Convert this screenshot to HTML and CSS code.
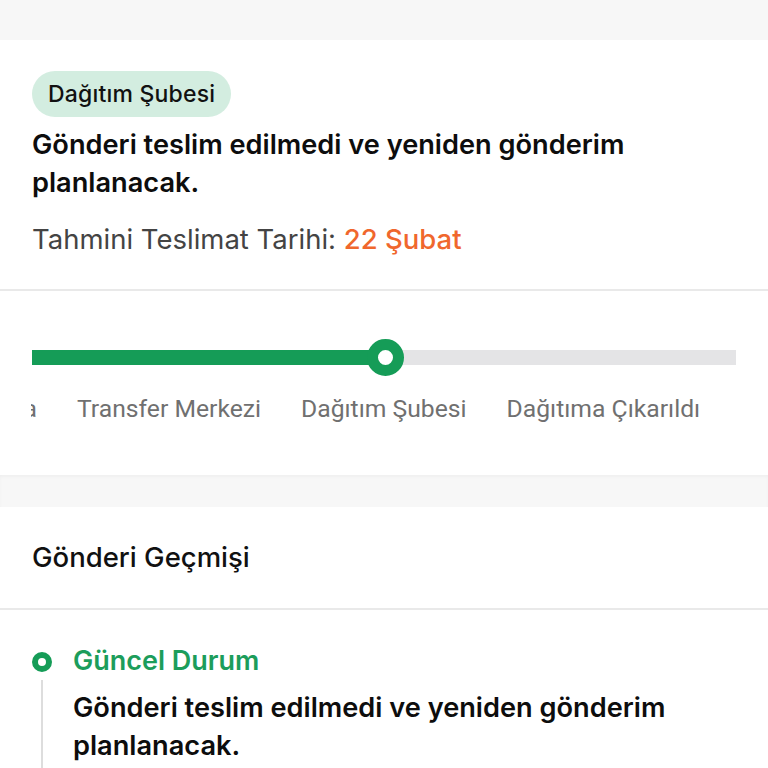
FILE: index.html
```html
<!DOCTYPE html>
<html lang="tr">
<head>
<meta charset="utf-8">
<title>Gönderi Takibi</title>
<link rel="stylesheet" href="styles.css">
</head>
<body>
<div class="top-band"></div>
<section class="card status-card">
  <span class="badge">Dağıtım Şubesi</span>
  <h1 class="status-title">Gönderi teslim edilmedi ve yeniden gönderim planlanacak.</h1>
  <p class="eta">Tahmini Teslimat Tarihi: <span class="eta-date">22 Şubat</span></p>
</section>
<section class="card stepper-card">
  <div class="track">
    <div class="track-fill" style="width: 353px"></div>
    <div class="track-knob" style="left: 353px"></div>
  </div>
  <div class="labels-viewport">
    <div class="labels">
      <span class="label label-cut"><span>Kabul Şubesinde Alındı Yolda</span></span>
      <span class="label">Transfer Merkezi</span>
      <span class="label">Dağıtım Şubesi</span>
      <span class="label">Dağıtıma Çıkarıldı</span>
    </div>
  </div>
</section>
<div class="gap-band"></div>
<section class="card history-card">
  <h2 class="history-title">Gönderi Geçmişi</h2>
  <div class="timeline">
    <div class="tl-item">
      <div class="tl-rail">
        <span class="tl-dot"></span>
        <span class="tl-line"></span>
      </div>
      <div class="tl-body">
        <div class="tl-head">Güncel Durum</div>
        <div class="tl-text">Gönderi teslim edilmedi ve yeniden gönderim planlanacak.</div>
      </div>
    </div>
  </div>
</section>
</body>
</html>
```

FILE: styles.css
```css
* { box-sizing: border-box; }
html, body { margin: 0; padding: 0; }
body {
  background: #f7f7f7;
  font-family: Inter, "Noto Sans", sans-serif;
  color: #111;
  width: 768px;
  height: 768px;
  overflow: hidden;
}
.top-band { height: 40px; }
.card { background: #fff; }

.status-card {
  padding: 31px 32px 32px;
  border-bottom: 2px solid #e9e9e9;
}
.badge {
  display: inline-block;
  height: 46px;
  line-height: 46px;
  padding: 0 16px;
  border-radius: 23px;
  background: #d3ede0;
  font-size: 23px;
  font-weight: 500;
  letter-spacing: 0.2px;
  color: #111;
}
.status-title {
  margin: 9px 0 0;
  font-size: 27.2px;
  font-weight: 600;
  line-height: 38px;
  color: #0d0d0d;
}
.eta {
  margin: 19px 0 0;
  font-size: 27.5px;
  line-height: 36px;
  color: #444;
}
.eta-date { color: #f0672d; font-weight: 500; }

.stepper-card {
  height: 184px;
  padding-top: 59px;
}
.track {
  position: relative;
  margin: 0 32px;
  height: 15px;
  background: #e4e4e6;
}
.track-fill {
  height: 100%;
  background: #159c57;
}
.track-knob {
  position: absolute;
  top: 50%;
  width: 37px;
  height: 37px;
  margin: -18.5px 0 0 -18.5px;
  border-radius: 50%;
  background: #fff;
  border: 11.5px solid #159c57;
}
.labels-viewport {
  margin: 29px 0 0 31px;
  overflow: hidden;
}
.labels {
  display: flex;
  gap: 40px;
  white-space: nowrap;
}
.label {
  font-family: Roboto, "Liberation Sans", sans-serif;
  font-size: 24.7px;
  line-height: 30px;
  color: #707070;
  flex: none;
}
.label-cut {
  display: flex;
  justify-content: flex-end;
  width: 6px;
  overflow: hidden;
}
.label-cut span { flex: none; }

.gap-band {
  height: 32px;
  background: #f7f7f7;
  box-shadow: inset 0 2px 3px rgba(0,0,0,0.03);
}

.history-card { min-height: 300px; }
.history-title {
  margin: 0;
  height: 103px;
  padding: 34px 0 0 32px;
  border-bottom: 2px solid #e9e9e9;
  font-size: 27.5px;
  font-weight: 500;
  line-height: 32px;
}
.timeline { padding: 35px 32px 0; }
.tl-item { display: flex; gap: 21px; }
.tl-rail {
  width: 20px;
  display: flex;
  flex-direction: column;
  align-items: center;
  padding-top: 7px;
}
.tl-dot {
  width: 20px;
  height: 20px;
  border-radius: 50%;
  border: 6px solid #159c57;
  background: #fff;
}
.tl-line {
  width: 2px;
  height: 120px;
  margin-top: 8px;
  background: #dddddd;
}
.tl-head {
  font-size: 27px;
  font-weight: 600;
  line-height: 32px;
  color: #1c9d5b;
}
.tl-text {
  margin-top: 12px;
  font-size: 27.2px;
  font-weight: 600;
  line-height: 38px;
  color: #0d0d0d;
}
```
